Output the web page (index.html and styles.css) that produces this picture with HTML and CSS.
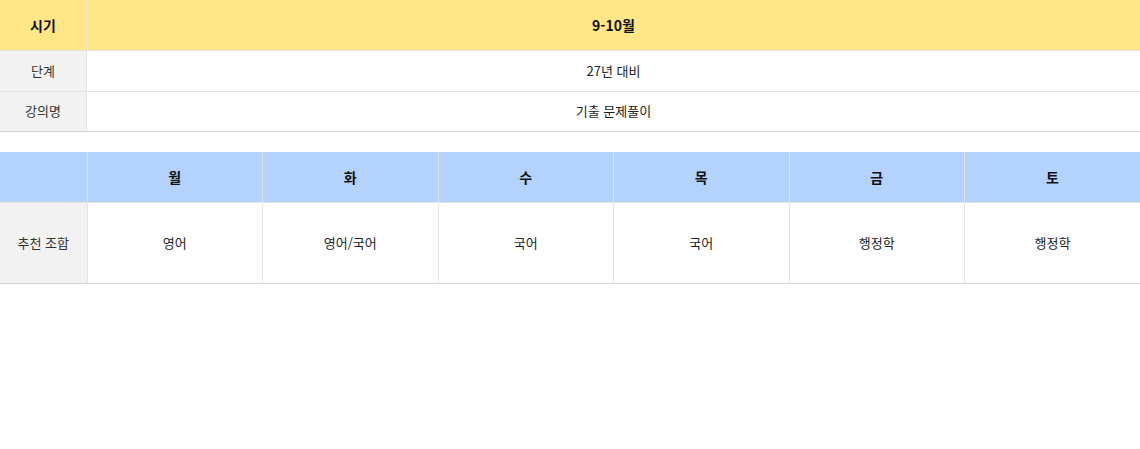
FILE: index.html
```html
<!DOCTYPE html>
<html lang="ko">
<head>
<meta charset="utf-8">
<link rel="stylesheet" href="styles.css">
</head>
<body>
<div class="page">
  <table class="tbl info">
    <tr class="row-head">
      <th class="label head-yellow">시기</th>
      <th class="head-yellow">9-10월</th>
    </tr>
    <tr class="row-a">
      <td class="label">단계</td>
      <td>27년 대비</td>
    </tr>
    <tr class="row-b">
      <td class="label">강의명</td>
      <td>기출 문제풀이</td>
    </tr>
  </table>

  <table class="tbl week">
    <colgroup>
      <col class="col-label">
      <col><col><col><col><col><col>
    </colgroup>
    <tr class="row-head-week">
      <th class="head-blue"></th>
      <th class="head-blue">월</th>
      <th class="head-blue">화</th>
      <th class="head-blue">수</th>
      <th class="head-blue">목</th>
      <th class="head-blue">금</th>
      <th class="head-blue">토</th>
    </tr>
    <tr class="row-c">
      <td class="label">추천 조합</td>
      <td>영어</td>
      <td>영어/국어</td>
      <td>국어</td>
      <td>국어</td>
      <td>행정학</td>
      <td>행정학</td>
    </tr>
  </table>
</div>
</body>
</html>
```

FILE: styles.css
```css
html, body {
  margin: 0;
  padding: 0;
  background: #fff;
}
body {
  font-family: "Noto Sans CJK KR", "Noto Sans", sans-serif;
  color: #222;
}
.page {
  display: flex;
  flex-direction: column;
  gap: 20px;
}
.tbl {
  width: 1140px;
  border-collapse: collapse;
  table-layout: fixed;
  border-bottom: 1px solid #d4d4d4;
}
.tbl th, .tbl td {
  padding: 0;
  text-align: center;
  vertical-align: middle;
  font-size: 13px;
  font-weight: 400;
  line-height: 18px;
  border-left: 1px solid #e3e3e3;
  border-bottom: 1px solid #e3e3e3;
}
.tbl tr > :first-child {
  border-left: none;
}
.tbl tr:last-child > * {
  border-bottom: 1px solid #d4d4d4;
}
.tbl th {
  font-size: 14px;
  font-weight: 700;
  color: #111;
}
.info .label {
  width: 86px;
}
.col-label {
  width: 87px;
}
.label {
  background: #f2f2f2;
  color: #333;
}
.head-yellow {
  background: #ffe687;
}
.head-blue {
  background: #b3d3fe;
}
.row-head {
  height: 50px;
}
.row-head-week {
  height: 51px;
}
.row-a {
  height: 41px;
}
.row-b {
  height: 40px;
}
.row-c {
  height: 81px;
}
```
